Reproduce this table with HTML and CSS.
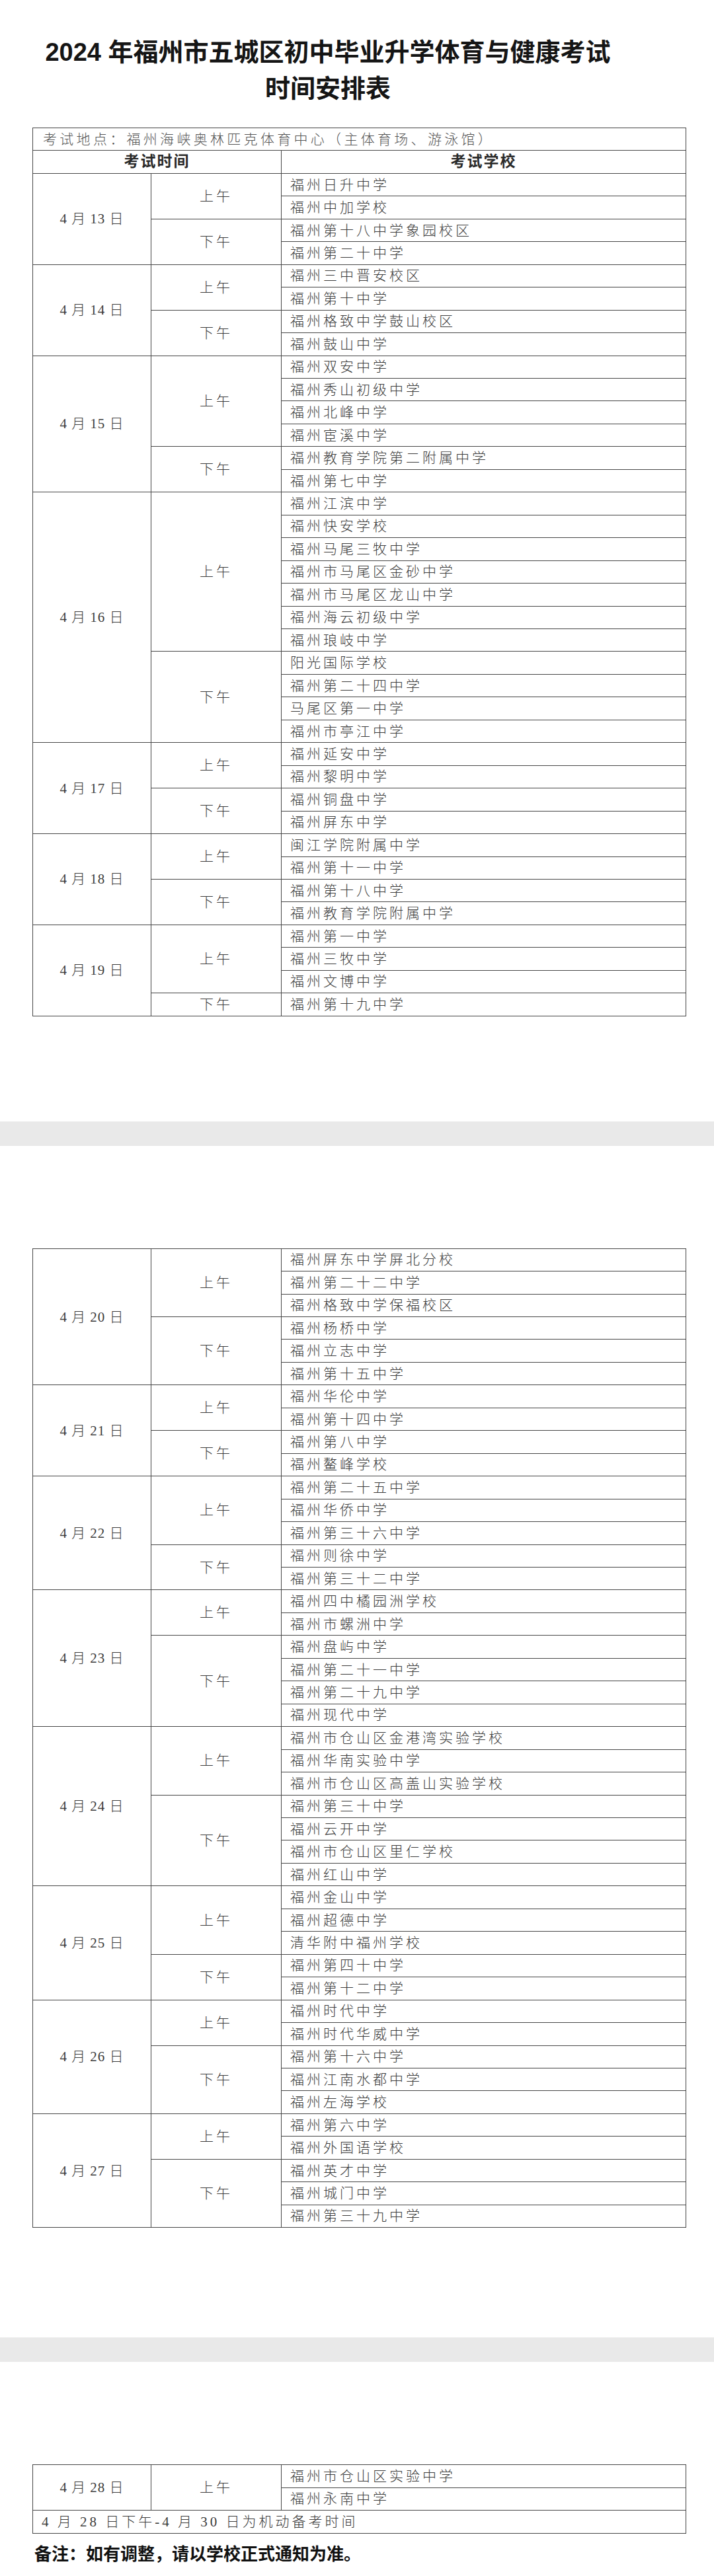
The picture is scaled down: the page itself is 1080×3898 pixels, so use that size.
FILE: index.html
```html
<!DOCTYPE html>
<html lang="zh-CN">
<head>
<meta charset="utf-8">
<title>2024年福州市五城区初中毕业升学体育与健康考试时间安排表</title>
<link rel="stylesheet" href="styles.css">
</head>
<body>
<section class="sheet sheet-first">
  <h1 class="title">
    <span class="title-line">2024 年福州市五城区初中毕业升学体育与健康考试</span>
    <span class="title-line">时间安排表</span>
  </h1>
  <table class="schedule">
    <colgroup><col class="c-date"><col class="c-period"><col class="c-school"></colgroup>
    <tr><td colspan="3" class="place">考试地点：福州海峡奥林匹克体育中心（主体育场、游泳馆）</td></tr>
    <tr><th colspan="2" class="head">考试时间</th><th class="head">考试学校</th></tr>

    <tr><td rowspan="4" class="date">4 月 13 日</td><td rowspan="2" class="period">上午</td><td class="school">福州日升中学</td></tr>
    <tr><td class="school">福州中加学校</td></tr>
    <tr><td rowspan="2" class="period">下午</td><td class="school">福州第十八中学象园校区</td></tr>
    <tr><td class="school">福州第二十中学</td></tr>

    <tr><td rowspan="4" class="date">4 月 14 日</td><td rowspan="2" class="period">上午</td><td class="school">福州三中晋安校区</td></tr>
    <tr><td class="school">福州第十中学</td></tr>
    <tr><td rowspan="2" class="period">下午</td><td class="school">福州格致中学鼓山校区</td></tr>
    <tr><td class="school">福州鼓山中学</td></tr>

    <tr><td rowspan="6" class="date">4 月 15 日</td><td rowspan="4" class="period">上午</td><td class="school">福州双安中学</td></tr>
    <tr><td class="school">福州秀山初级中学</td></tr>
    <tr><td class="school">福州北峰中学</td></tr>
    <tr><td class="school">福州宦溪中学</td></tr>
    <tr><td rowspan="2" class="period">下午</td><td class="school">福州教育学院第二附属中学</td></tr>
    <tr><td class="school">福州第七中学</td></tr>

    <tr><td rowspan="11" class="date">4 月 16 日</td><td rowspan="7" class="period">上午</td><td class="school">福州江滨中学</td></tr>
    <tr><td class="school">福州快安学校</td></tr>
    <tr><td class="school">福州马尾三牧中学</td></tr>
    <tr><td class="school">福州市马尾区金砂中学</td></tr>
    <tr><td class="school">福州市马尾区龙山中学</td></tr>
    <tr><td class="school">福州海云初级中学</td></tr>
    <tr><td class="school">福州琅岐中学</td></tr>
    <tr><td rowspan="4" class="period">下午</td><td class="school">阳光国际学校</td></tr>
    <tr><td class="school">福州第二十四中学</td></tr>
    <tr><td class="school">马尾区第一中学</td></tr>
    <tr><td class="school">福州市亭江中学</td></tr>

    <tr><td rowspan="4" class="date">4 月 17 日</td><td rowspan="2" class="period">上午</td><td class="school">福州延安中学</td></tr>
    <tr><td class="school">福州黎明中学</td></tr>
    <tr><td rowspan="2" class="period">下午</td><td class="school">福州铜盘中学</td></tr>
    <tr><td class="school">福州屏东中学</td></tr>

    <tr><td rowspan="4" class="date">4 月 18 日</td><td rowspan="2" class="period">上午</td><td class="school">闽江学院附属中学</td></tr>
    <tr><td class="school">福州第十一中学</td></tr>
    <tr><td rowspan="2" class="period">下午</td><td class="school">福州第十八中学</td></tr>
    <tr><td class="school">福州教育学院附属中学</td></tr>

    <tr><td rowspan="4" class="date">4 月 19 日</td><td rowspan="3" class="period">上午</td><td class="school">福州第一中学</td></tr>
    <tr><td class="school">福州三牧中学</td></tr>
    <tr><td class="school">福州文博中学</td></tr>
    <tr><td class="period">下午</td><td class="school">福州第十九中学</td></tr>
  </table>
</section>

<div class="page-gap"></div>

<section class="sheet sheet-next">
  <table class="schedule">
    <colgroup><col class="c-date"><col class="c-period"><col class="c-school"></colgroup>
    <tr><td rowspan="6" class="date">4 月 20 日</td><td rowspan="3" class="period">上午</td><td class="school">福州屏东中学屏北分校</td></tr>
    <tr><td class="school">福州第二十二中学</td></tr>
    <tr><td class="school">福州格致中学保福校区</td></tr>
    <tr><td rowspan="3" class="period">下午</td><td class="school">福州杨桥中学</td></tr>
    <tr><td class="school">福州立志中学</td></tr>
    <tr><td class="school">福州第十五中学</td></tr>

    <tr><td rowspan="4" class="date">4 月 21 日</td><td rowspan="2" class="period">上午</td><td class="school">福州华伦中学</td></tr>
    <tr><td class="school">福州第十四中学</td></tr>
    <tr><td rowspan="2" class="period">下午</td><td class="school">福州第八中学</td></tr>
    <tr><td class="school">福州鳌峰学校</td></tr>

    <tr><td rowspan="5" class="date">4 月 22 日</td><td rowspan="3" class="period">上午</td><td class="school">福州第二十五中学</td></tr>
    <tr><td class="school">福州华侨中学</td></tr>
    <tr><td class="school">福州第三十六中学</td></tr>
    <tr><td rowspan="2" class="period">下午</td><td class="school">福州则徐中学</td></tr>
    <tr><td class="school">福州第三十二中学</td></tr>

    <tr><td rowspan="6" class="date">4 月 23 日</td><td rowspan="2" class="period">上午</td><td class="school">福州四中橘园洲学校</td></tr>
    <tr><td class="school">福州市螺洲中学</td></tr>
    <tr><td rowspan="4" class="period">下午</td><td class="school">福州盘屿中学</td></tr>
    <tr><td class="school">福州第二十一中学</td></tr>
    <tr><td class="school">福州第二十九中学</td></tr>
    <tr><td class="school">福州现代中学</td></tr>

    <tr><td rowspan="7" class="date">4 月 24 日</td><td rowspan="3" class="period">上午</td><td class="school">福州市仓山区金港湾实验学校</td></tr>
    <tr><td class="school">福州华南实验中学</td></tr>
    <tr><td class="school">福州市仓山区高盖山实验学校</td></tr>
    <tr><td rowspan="4" class="period">下午</td><td class="school">福州第三十中学</td></tr>
    <tr><td class="school">福州云开中学</td></tr>
    <tr><td class="school">福州市仓山区里仁学校</td></tr>
    <tr><td class="school">福州红山中学</td></tr>

    <tr><td rowspan="5" class="date">4 月 25 日</td><td rowspan="3" class="period">上午</td><td class="school">福州金山中学</td></tr>
    <tr><td class="school">福州超德中学</td></tr>
    <tr><td class="school">清华附中福州学校</td></tr>
    <tr><td rowspan="2" class="period">下午</td><td class="school">福州第四十中学</td></tr>
    <tr><td class="school">福州第十二中学</td></tr>

    <tr><td rowspan="5" class="date">4 月 26 日</td><td rowspan="2" class="period">上午</td><td class="school">福州时代中学</td></tr>
    <tr><td class="school">福州时代华威中学</td></tr>
    <tr><td rowspan="3" class="period">下午</td><td class="school">福州第十六中学</td></tr>
    <tr><td class="school">福州江南水都中学</td></tr>
    <tr><td class="school">福州左海学校</td></tr>

    <tr><td rowspan="5" class="date">4 月 27 日</td><td rowspan="2" class="period">上午</td><td class="school">福州第六中学</td></tr>
    <tr><td class="school">福州外国语学校</td></tr>
    <tr><td rowspan="3" class="period">下午</td><td class="school">福州英才中学</td></tr>
    <tr><td class="school">福州城门中学</td></tr>
    <tr><td class="school">福州第三十九中学</td></tr>
  </table>
</section>

<div class="page-gap"></div>

<section class="sheet sheet-next">
  <table class="schedule">
    <colgroup><col class="c-date"><col class="c-period"><col class="c-school"></colgroup>
    <tr><td rowspan="2" class="date">4 月 28 日</td><td rowspan="2" class="period">上午</td><td class="school">福州市仓山区实验中学</td></tr>
    <tr><td class="school">福州永南中学</td></tr>
    <tr><td colspan="3" class="school">4 月 28 日下午-4 月 30 日为机动备考时间</td></tr>
  </table>
  <p class="remark">备注：如有调整，请以学校正式通知为准。</p>
</section>
</body>
</html>
```

FILE: styles.css
```css
html, body {
  margin: 0;
  padding: 0;
  background: #ffffff;
}

body {
  width: 1080px;
  font-family: "Liberation Serif", "Noto Sans CJK SC", serif;
  color: #3a3a3a;
}

.sheet {
  padding-left: 49px;
}

.sheet-first {
  padding-top: 52px;
  padding-bottom: 159px;
}

.sheet-next {
  padding-top: 155px;
  padding-bottom: 166px;
}

.sheet-next:last-child {
  padding-bottom: 0;
}

.title {
  width: 894px;
  margin: 0 0 31px 0;
  font-family: "Liberation Sans", "Noto Sans CJK SC", sans-serif;
  font-size: 38px;
  line-height: 55px;
  font-weight: 700;
  color: #151515;
  text-align: center;
}

.title-line {
  display: block;
}

.page-gap {
  height: 37px;
  background: #e9e9e9;
}

.schedule {
  width: 988px;
  border-collapse: collapse;
  table-layout: fixed;
}

.c-date { width: 179px; }
.c-period { width: 197px; }
.c-school { width: 612px; }

.schedule tr {
  height: 34.46px;
}

.schedule td,
.schedule th {
  border: 1.5px solid #474747;
  padding: 0;
  font-size: 21px;
  line-height: 24px;
  font-weight: 300;
  letter-spacing: 4px;
  color: #3c3c3c;
  vertical-align: middle;
}

.schedule .place {
  padding-left: 15px;
  text-align: left;
  letter-spacing: 4.3px;
  color: #555555;
}

.schedule .head {
  font-size: 23px;
  font-weight: 700;
  letter-spacing: 2px;
  color: #2a2a2a;
  text-align: center;
}

.schedule .date {
  text-align: center;
  letter-spacing: 1px;
}

.schedule .period {
  text-align: center;
}

.schedule .school {
  padding-left: 13px;
  text-align: left;
}

.remark {
  margin: 16px 0 0 3px;
  font-family: "Liberation Sans", "Noto Sans CJK SC", sans-serif;
  font-size: 26px;
  line-height: 30px;
  font-weight: 700;
  color: #111111;
}
```
